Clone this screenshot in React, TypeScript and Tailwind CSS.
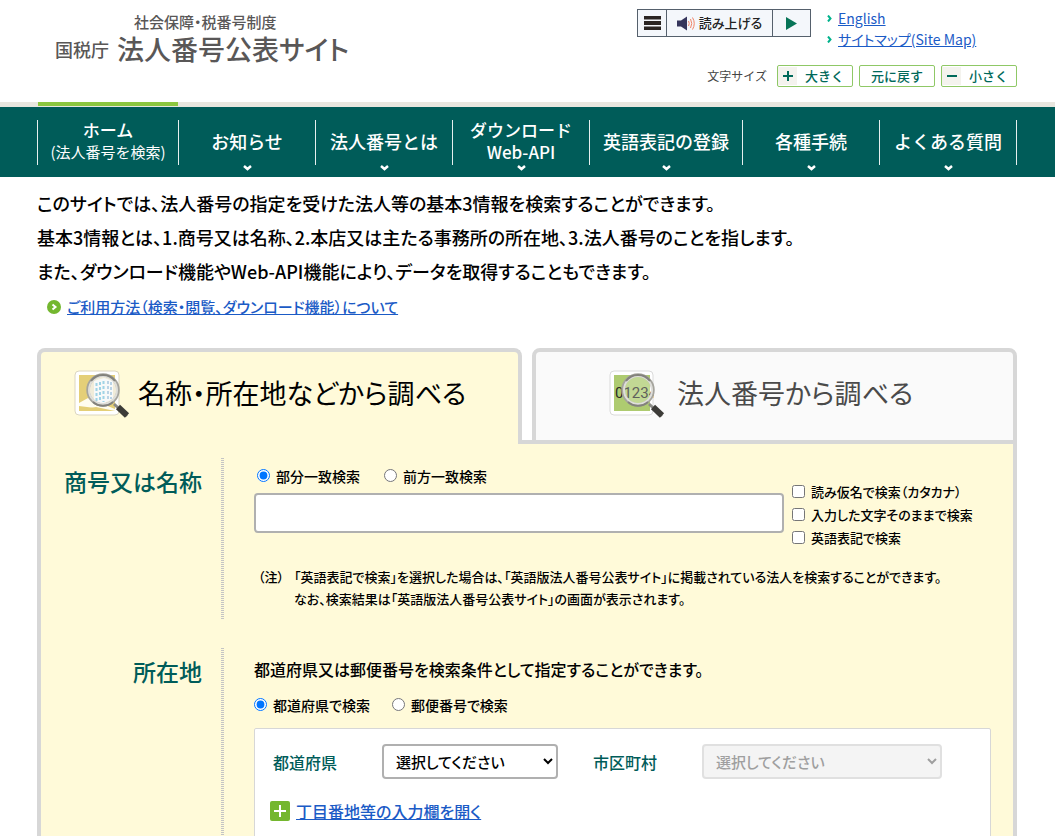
import { ReactNode } from 'react';

interface NavItem {
  label: string;
  sub?: string;
  width: string;
  current?: boolean;
}

const navItems: NavItem[] = [
  { label: 'ホーム', sub: '(法人番号を検索)', width: 'basis-[142px]', current: true },
  { label: 'お知らせ', width: 'basis-[137px]' },
  { label: '法人番号とは', width: 'basis-[137px]' },
  { label: 'ダウンロード', sub: 'Web-API', width: 'basis-[137px]' },
  { label: '英語表記の登録', width: 'basis-[153px]' },
  { label: '各種手続', width: 'basis-[137px]' },
  { label: 'よくある質問', width: 'basis-[137px]' },
];

const nameOptions = ['読み仮名で検索（カタカナ）', '入力した文字そのままで検索', '英語表記で検索'];

const Chevron = () => (
  <svg className="absolute bottom-1.5 left-1/2 -ml-[5px]" width="9" height="6" viewBox="0 0 9 6" fill="none" stroke="#fff" strokeWidth="2.500">
    <path d="M1 1l3.500 3L8 1" />
  </svg>
);

const Glass = () => (
  <>
    <path d="M40 34l13 12" stroke="#8a8a86" strokeWidth="3" />
    <path d="M44 37l9 8.500" stroke="#3c3b38" strokeWidth="6" />
    <circle cx="29" cy="20" r="15" fill="#fff" fillOpacity="0.25" stroke="#a5a49d" strokeWidth="3.500" />
    <circle cx="29" cy="20" r="14" fill="none" stroke="#dededa" strokeWidth="2" />
    <path d="M17 11a15 15 0 0 1 24 0M19 32a15 15 0 0 0 20 0" fill="none" stroke="#83827c" strokeWidth="2" />
  </>
);

const MapIcon = () => (
  <svg width="56" height="49" viewBox="0 0 56 49" aria-hidden="true">
    <rect x="1" y="1" width="44" height="44" rx="4" fill="#fff" stroke="#dcd6c0" />
    <rect x="5" y="5" width="36" height="36" fill="#e4cf78" />
    <path d="M5 33l9-5 27 11v2L22 37 5 40z" fill="#fffdf0" />
    <path d="M5 36l16 2-16 3z" fill="#e4cf78" />
    <circle cx="29" cy="20" r="14" fill="#ece6cd" />
    <path d="M20 11l10-3v26l-10-3zM30 8l9 3v18l-9 4z" fill="#f5f7f7" />
    <path d="M22.500 13v18M26 12v20M29.500 11v21" stroke="#7fc4dc" strokeWidth="2" strokeDasharray="3 2" />
    <path d="M34 11v20M37 12v17" stroke="#a3c4dc" strokeWidth="2" strokeDasharray="3 2" />
    <Glass />
  </svg>
);

const NumberIcon = () => (
  <svg width="56" height="49" viewBox="0 0 56 49" aria-hidden="true">
    <rect x="1" y="1" width="43" height="44" rx="4" fill="#fff" stroke="#dadada" />
    <rect x="5" y="5" width="36" height="36" fill="#aecb70" />
    <text x="6" y="28" fontSize="15" fill="#2a2a26" fontFamily="Roboto, sans-serif">
      01234
    </text>
    <path d="M45 5h8v28h-8z" fill="#fafafa" />
    <Glass />
  </svg>
);

const SizeButton = ({ sign, children }: { sign?: 'plus' | 'minus'; children: ReactNode }) => (
  <button className="flex h-[22px] w-[76px] items-center rounded-xs border border-[#8fc866] bg-white text-[13px] font-medium text-[#00695a] [font-feature-settings:normal]">
    {sign && (
      <span className="flex h-[18px] w-[19px] items-center justify-center bg-[#f4f3ee]">
        <svg width="10" height="10" viewBox="0 0 10 10" stroke="#00695a" strokeWidth="2">
          <path d={sign === 'plus' ? 'M0 5h10M5 0v10' : 'M0 5h10'} />
        </svg>
      </span>
    )}
    <span className="flex-1 text-center">{children}</span>
  </button>
);

const SmallArrow = () => (
  <svg width="5" height="7" viewBox="0 0 5 7" fill="none" stroke="#00b28c" strokeWidth="2">
    <path d="M1 .5l2.500 3L1 6.500" />
  </svg>
);

const Header = () => (
  <header className="mx-auto flex h-[102px] max-w-[981px] justify-between pr-px">
    <h1 className="pt-3 pl-[18px] text-[#595757]">
      <span className="block pl-[79px] text-[15px] leading-5 font-medium">社会保障・税番号制度</span>
      <span className="flex items-center gap-2 leading-[34px]">
        <span className="text-[18px] font-medium">国税庁</span>
        <span className="text-[27px] font-medium">法人番号公表サイト</span>
      </span>
    </h1>
    <div className="w-[380px] pt-[9px]">
      <div className="flex gap-4">
        <div className="flex h-7 w-[174px] border border-[#55606c] bg-[#f4f7fb]">
          <button aria-label="メニュー" className="flex w-7 items-center justify-center">
            <svg width="17" height="14" viewBox="0 0 17 14" fill="#2b2523">
              <path d="M0 0h17v3.500H0zM0 5h17v4H0zM0 10.500h17V14H0z" />
            </svg>
          </button>
          <button className="flex flex-1 items-center justify-center gap-1 border-x border-[#55606c] text-[13px] font-medium text-[#222]">
            <svg width="18" height="15" viewBox="0 0 18 15" fill="none">
              <path d="M0 4.500h4L10 .5v14l-6-4H0z" fill="#36365c" />
              <path d="M11.500 5q1.500 2.500 0 5M13.500 3q2.500 4.500 0 9M15.500 1.500q3.500 6 0 12" stroke="#f08468" />
            </svg>
            読み上げる
          </button>
          <button aria-label="再生" className="flex w-[37px] items-center justify-center">
            <svg width="11" height="13" viewBox="0 0 11 13" fill="#067457">
              <path d="M0 0l11 6.500L0 13z" />
            </svg>
          </button>
        </div>
        <ul className="-mt-px text-sm leading-[21px] text-[#1b5bc6]">
          <li className="flex items-center gap-1.5">
            <SmallArrow />
            <a href="#" className="underline">English</a>
          </li>
          <li className="flex items-center gap-1.5">
            <SmallArrow />
            <a href="#" className="underline">サイトマップ(Site Map)</a>
          </li>
        </ul>
      </div>
      <div className="mt-[15px] flex items-center justify-end gap-1.5">
        <span className="mr-1 text-xs text-[#444] [font-feature-settings:normal]">文字サイズ</span>
        <SizeButton sign="plus">大きく</SizeButton>
        <SizeButton>元に戻す</SizeButton>
        <SizeButton sign="minus">小さく</SizeButton>
      </div>
    </div>
  </header>
);

const GlobalNav = () => (
  <>
    <div className="h-[5px] bg-[#e8e6df]">
      <div className="mx-auto max-w-[981px] pl-px">
        <div className="h-1 w-[140px] bg-[#8cc63f]" />
      </div>
    </div>
    <nav className="bg-[#005c59] text-white [font-feature-settings:normal]">
      <ul className="mx-auto flex h-[70px] max-w-[981px] items-stretch pr-px">
        {navItems.map((item) => (
          <li key={item.label} className={`relative flex shrink grow-0 ${item.width}`}>
            <a
              href="#"
              className={`mt-[13px] mb-3 flex flex-1 flex-col items-center justify-center border-r border-white/90 pb-1 font-medium whitespace-nowrap ${item.current ? 'border-l' : ''}`}
            >
              <span className={item.sub ? 'text-[17px] leading-[22px]' : 'text-lg leading-6'}>{item.label}</span>
              {item.sub && (
                <span className={item.current ? 'text-[15px] leading-[22px] font-normal' : 'text-[17px] leading-[22px]'}>{item.sub}</span>
              )}
            </a>
            {!item.current && <Chevron />}
          </li>
        ))}
      </ul>
    </nav>
  </>
);

const Intro = () => (
  <section className="pt-[9px]">
    <div className="text-lg leading-[34px] font-medium">
      <p>このサイトでは、法人番号の指定を受けた法人等の基本3情報を検索することができます。</p>
      <p>基本3情報とは、1.商号又は名称、2.本店又は主たる事務所の所在地、3.法人番号のことを指します。</p>
      <p>また、ダウンロード機能やWeb-API機能により、データを取得することもできます。</p>
    </div>
    <p className="mt-[7px] flex items-center gap-1.5 pl-2.5 text-[15px] leading-6 font-medium">
      <svg width="14" height="14" viewBox="0 0 14 14" fill="none">
        <circle cx="7" cy="7" r="7" fill="#74b72f" />
        <path d="M5.500 4.500L8.500 7l-3 2.500" stroke="#fff" strokeWidth="2" />
      </svg>
      <a href="#" className="text-[#1b5bc6] underline">ご利用方法（検索・閲覧、ダウンロード機能）について</a>
    </p>
  </section>
);

const Tabs = () => (
  <div role="tablist" className="mt-[29px] flex">
    <button
      role="tab"
      aria-selected="true"
      className="flex h-24 basis-[calc(50%-5px)] items-start gap-2 rounded-t-lg border-x-4 border-t-4 border-[#d7d7d7] bg-[#fffad9] pt-[18px] pl-[33px]"
    >
      <MapIcon />
      <span className="text-[27px] leading-[46px] whitespace-nowrap">名称・所在地などから調べる</span>
    </button>
    <div className="w-2.5 border-b-4 border-[#d7d7d7]" />
    <button
      role="tab"
      aria-selected="false"
      className="flex h-24 basis-[calc(50%-5px)] items-start gap-3 rounded-t-lg border-4 border-[#d7d7d7] bg-[#fafafa] pt-[18px] pl-[73px] text-[#4a4a4a]"
    >
      <NumberIcon />
      <span className="text-[27px] leading-[46px] whitespace-nowrap">法人番号から調べる</span>
    </button>
  </div>
);

const FormRow = ({ title, children }: { title: string; children: ReactNode }) => (
  <section className="flex">
    <h2 className="w-[161px] shrink-0 pt-[5px] text-right text-[23px] leading-9 font-medium text-[#005c59]">{title}</h2>
    <div className="ml-[19px] w-[3px] shrink-0 bg-[repeating-linear-gradient(to_bottom,#c4c4c4_0px,#c4c4c4_1px,transparent_1px,transparent_2px)]" />
    <div className="ml-[30px] min-w-0 flex-1 pr-[22px]">{children}</div>
  </section>
);

const Choice = ({ name, label, checked }: { name: string; label: string; checked?: boolean }) => (
  <label className="flex items-center gap-1.5">
    <input type="radio" name={name} defaultChecked={checked} className="size-[13px]" />
    {label}
  </label>
);

const SearchPanel = () => (
  <div className="border-x-4 border-[#d7d7d7] bg-[#fffad9] pt-3.5">
    <FormRow title="商号又は名称">
      <div className="flex h-[35px] items-center gap-6 pl-[3px] text-sm font-medium">
        <Choice name="match" label="部分一致検索" checked />
        <Choice name="match" label="前方一致検索" />
      </div>
      <div className="-mr-2.5 flex gap-2">
        <input
          type="text"
          aria-label="商号又は名称"
          className="h-10 max-w-[530px] min-w-0 flex-1 rounded border-2 border-[#b0b0b0] bg-white px-3 text-base"
        />
        <div className="-mt-[13px] w-[194px] text-[13px] leading-[23px] font-medium">
          {nameOptions.map((option) => (
            <label key={option} className="flex items-center gap-1.5 whitespace-nowrap">
              <input type="checkbox" className="size-[13px]" />
              {option}
            </label>
          ))}
        </div>
      </div>
      <div className="flex gap-2.5 pt-[17px] pb-[9px] text-[13px] leading-[22px] font-medium">
        <span className="shrink-0 pl-1">（注）</span>
        <p>
          「英語表記で検索」を選択した場合は、「英語版法人番号公表サイト」に掲載されている法人を検索することができます。
          <br />
          なお、検索結果は「英語版法人番号公表サイト」の画面が表示されます。
        </p>
      </div>
    </FormRow>
    <div className="h-[29px]" />
    <FormRow title="所在地">
      <p className="pt-[9px] text-base leading-6 font-medium">都道府県又は郵便番号を検索条件として指定することができます。</p>
      <div className="flex h-[47px] items-center gap-[22px] text-sm font-medium">
        <Choice name="area" label="都道府県で検索" checked />
        <Choice name="area" label="郵便番号で検索" />
      </div>
      <div className="h-40 rounded-xs border border-[#d7d7d7] bg-white px-[15px] pt-[15px] text-base font-medium">
        <div className="flex items-center pl-[3px] text-[#005c59]">
          <label htmlFor="pref" className="w-[109px]">都道府県</label>
          <select id="pref" className="h-[35px] w-44 rounded border-2 border-[#b0b0b0] bg-white pl-2 text-[15px] text-black">
            <option>選択してください</option>
          </select>
          <label htmlFor="city" className="ml-[35px] w-[109px]">市区町村</label>
          <select id="city" disabled className="h-[35px] w-60 rounded border-2 border-[#d4d4d4] bg-[#f0f0f0] pl-2 text-[15px] text-[#777] opacity-70">
            <option>選択してください</option>
          </select>
        </div>
        <a href="#" className="mt-5 flex items-center gap-1.5 text-[#1b5bc6]">
          <svg width="20" height="20" viewBox="0 0 20 20">
            <rect width="20" height="20" rx="2" fill="#74b72f" />
            <path d="M4 10h12M10 4v12" stroke="#fff" strokeWidth="2" />
          </svg>
          <span className="underline">丁目番地等の入力欄を開く</span>
        </a>
      </div>
    </FormRow>
  </div>
);

const App = () => {
  return (
    <div className="bg-white font-['Noto_Sans_CJK_JP',sans-serif] text-black [font-feature-settings:'palt']">
      <Header />
      <GlobalNav />
      <main className="mx-auto max-w-[981px] pr-px">
        <Intro />
        <Tabs />
        <SearchPanel />
      </main>
    </div>
  );
};

export default App;
